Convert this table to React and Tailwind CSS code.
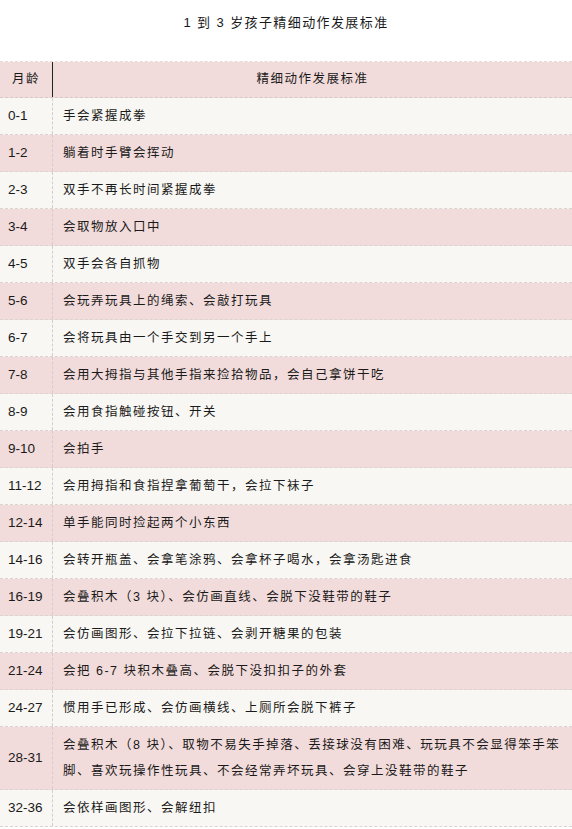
import React from "react";

const rows = [
  ["0-1", "手会紧握成拳"],
  ["1-2", "躺着时手臂会挥动"],
  ["2-3", "双手不再长时间紧握成拳"],
  ["3-4", "会取物放入口中"],
  ["4-5", "双手会各自抓物"],
  ["5-6", "会玩弄玩具上的绳索、会敲打玩具"],
  ["6-7", "会将玩具由一个手交到另一个手上"],
  ["7-8", "会用大拇指与其他手指来捡拾物品，会自己拿饼干吃"],
  ["8-9", "会用食指触碰按钮、开关"],
  ["9-10", "会拍手"],
  ["11-12", "会用拇指和食指捏拿葡萄干，会拉下袜子"],
  ["12-14", "单手能同时捡起两个小东西"],
  ["14-16", "会转开瓶盖、会拿笔涂鸦、会拿杯子喝水，会拿汤匙进食"],
  ["16-19", "会叠积木（3 块）、会仿画直线、会脱下没鞋带的鞋子"],
  ["19-21", "会仿画图形、会拉下拉链、会剥开糖果的包装"],
  ["21-24", "会把 6-7 块积木叠高、会脱下没扣扣子的外套"],
  ["24-27", "惯用手已形成、会仿画横线、上厕所会脱下裤子"],
  ["28-31", "会叠积木（8 块）、取物不易失手掉落、丢接球没有困难、玩玩具不会显得笨手笨脚、喜欢玩操作性玩具、不会经常弄坏玩具、会穿上没鞋带的鞋子"],
  ["32-36", "会依样画图形、会解纽扣"],
];

export default function App() {
  return (
    <div
      className="w-[572px] h-[829px] overflow-hidden bg-white text-[#1a1a1a]"
      style={{ fontFamily: '"Liberation Sans", "Noto Sans CJK SC", sans-serif' }}
    >
      <div className="h-[44px] flex items-center justify-center text-[13px] tracking-[1.4px] pt-[1px]">
        1 到 3 岁孩子精细动作发展标准
      </div>
      <div className="h-[17px]" />
      <div className="border-t border-dashed border-[#e6dada]">
        <div className="flex h-[36px] bg-[#f2dcdb] border-b border-dashed border-[#d9c6c6] text-[12.5px] tracking-[1.5px]">
          <div className="w-[53px] shrink-0 flex items-center justify-center border-r border-[#222]">
            月龄
          </div>
          <div className="flex-1 flex items-center justify-center">精细动作发展标准</div>
        </div>
        {rows.map(([age, text], i) => (
          <div
            key={age}
            className={
              "flex border-b border-dashed border-[#dcd2d2] " +
              (i % 2 === 0 ? "bg-[#f8f7f3]" : "bg-[#f2dcdb]")
            }
          >
            <div className="w-[53px] shrink-0 flex items-center pl-[8px] text-[13.5px] border-r border-dashed border-[#d6cccc]">
              {age}
            </div>
            <div className="flex-1 pl-[10px] pr-[6px] py-[5px] leading-[26px] text-[12.5px] tracking-[1.5px]">
              {text}
            </div>
          </div>
        ))}
      </div>
    </div>
  );
}
